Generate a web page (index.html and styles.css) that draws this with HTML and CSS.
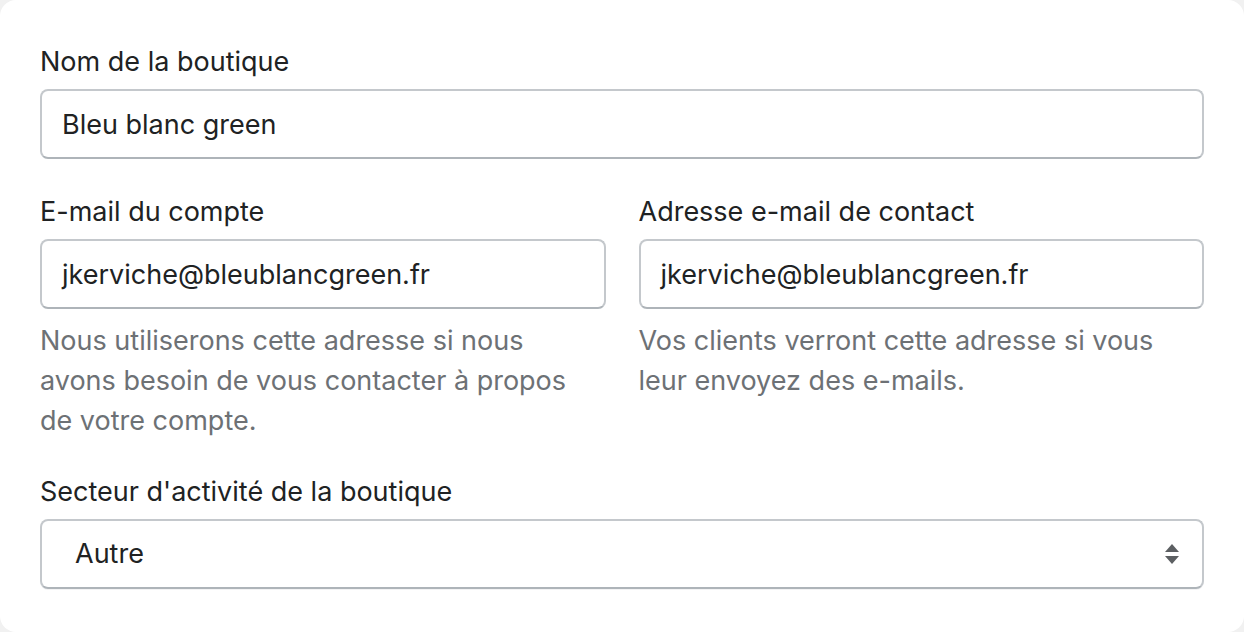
FILE: index.html
```html
<!DOCTYPE html>
<html lang="fr">
<head>
<meta charset="utf-8">
<title>Boutique</title>
<link rel="stylesheet" href="styles.css">
</head>
<body>
<div class="card">
  <div class="field">
    <div class="label">Nom de la boutique</div>
    <div class="input">Bleu blanc green</div>
  </div>
  <div class="row">
    <div class="field">
      <div class="label">E-mail du compte</div>
      <div class="input">jkerviche@bleublancgreen.fr</div>
      <div class="help">Nous utiliserons cette adresse si nous avons besoin de vous contacter à propos de votre compte.</div>
    </div>
    <div class="field">
      <div class="label">Adresse e-mail de contact</div>
      <div class="input">jkerviche@bleublancgreen.fr</div>
      <div class="help">Vos clients verront cette adresse si vous leur envoyez des e-mails.</div>
    </div>
  </div>
  <div class="field">
    <div class="label">Secteur d'activité de la boutique</div>
    <div class="input select">
      <span>Autre</span>
      <svg class="arrows" width="16" height="22" viewBox="0 0 16 22"><path d="M8 1 L15 9 L1 9 Z" fill="#5c5f62"/><path d="M1 13 L15 13 L8 21 Z" fill="#5c5f62"/></svg>
    </div>
  </div>
</div>
</body>
</html>
```
FILE: styles.css
```css
html, body {
  margin: 0;
  padding: 0;
  background: #f1f1f1;
}
body {
  font-family: Inter, "Noto Sans", sans-serif;
  color: #202223;
}
.card {
  box-sizing: border-box;
  width: 1244px;
  height: 632px;
  background: #ffffff;
  border-radius: 16px;
  padding: 41px 40px 40px 40px;
  display: flex;
  flex-direction: column;
  gap: 32px;
}
.row {
  display: grid;
  grid-template-columns: 1fr 1fr;
  column-gap: 33px;
}
.field {
  display: flex;
  flex-direction: column;
  min-width: 0;
}
.label {
  box-sizing: border-box;
  font-size: 27px;
  line-height: 40px;
  height: 40px;
  padding-top: 1px;
  margin-bottom: 8px;
  color: #202223;
}
.input {
  box-sizing: border-box;
  height: 70px;
  border: 2px solid #c4c8cc;
  border-bottom-color: #aeb4b9;
  border-radius: 8px;
  padding: 0 20px;
  font-size: 27px;
  line-height: 68px;
  color: #202223;
  background: #fff;
}
.select {
  display: flex;
  align-items: center;
  justify-content: space-between;
  padding: 0 22px 0 33px;
  box-shadow: 0 1px 0 rgba(22, 29, 37, 0.05);
}
.arrows {
  display: block;
}
.help {
  margin-top: 12px;
  margin-bottom: -2px;
  font-size: 27px;
  line-height: 40px;
  color: #6d7175;
  padding-right: 24px;
}
```
